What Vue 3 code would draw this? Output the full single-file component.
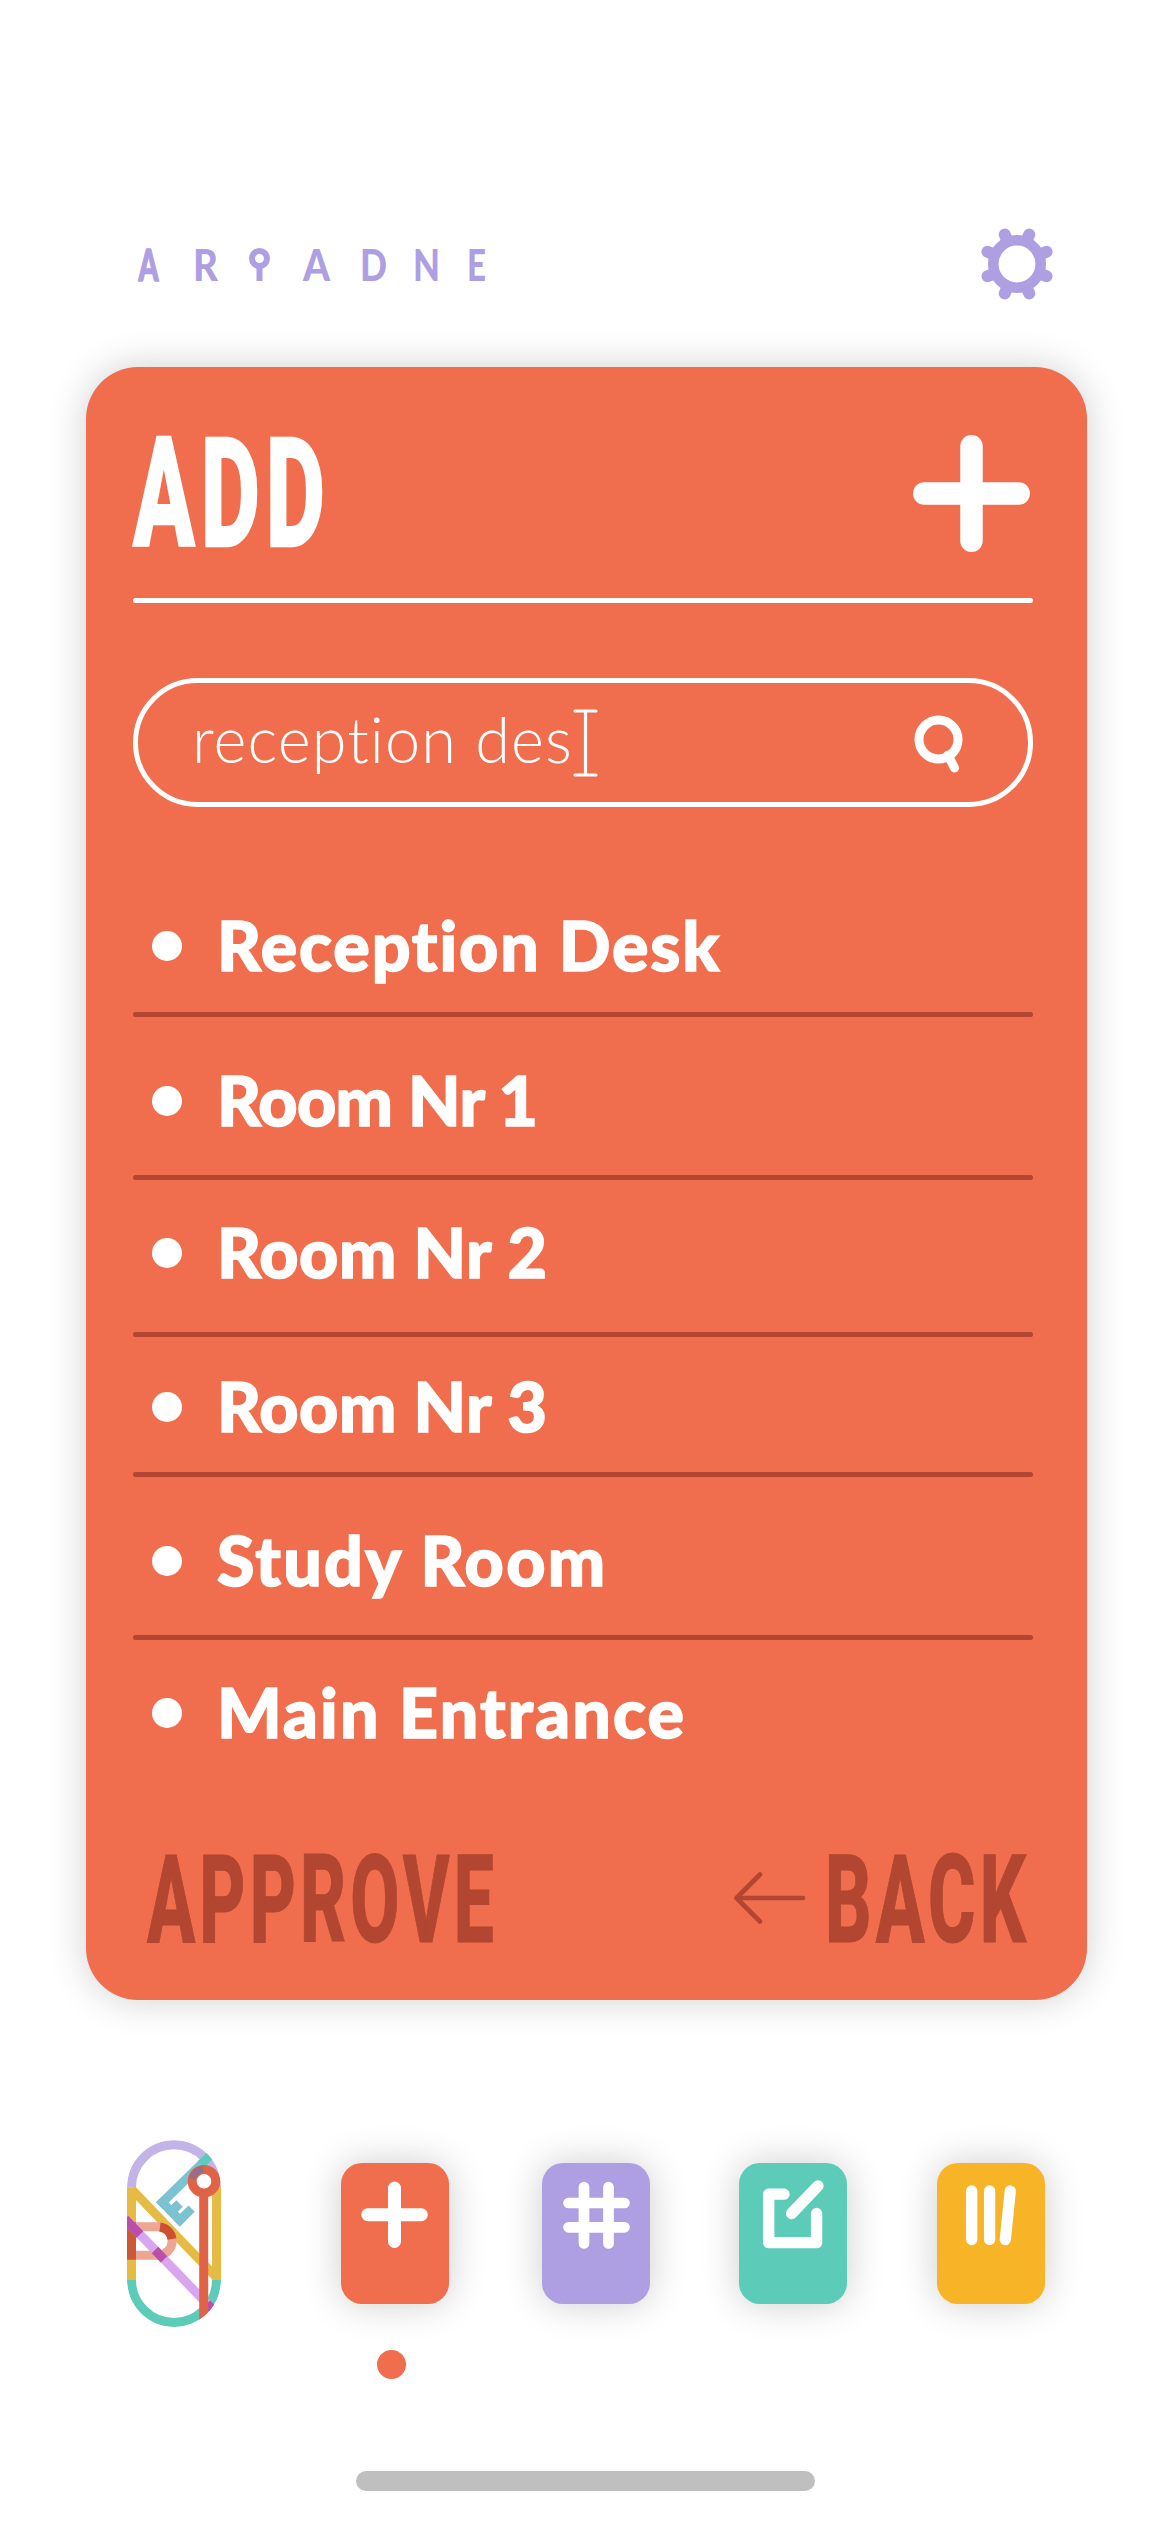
<script setup>
import { ref } from 'vue'

const query = ref('reception des')
const places = [
  { name: 'Reception Desk', tracking: 1.9 },
  { name: 'Room Nr 1', tracking: -0.6 },
  { name: 'Room Nr 2', tracking: 0.5 },
  { name: 'Room Nr 3', tracking: 0.5 },
  { name: 'Study Room', tracking: 2.3 },
  { name: 'Main Entrance', tracking: 2.2 }
]
const teeth = [22.5, 67.5, 112.5, 157.5, 202.5, 247.5, 292.5, 337.5]
</script>

<template>
  <div class="screen">
    <header class="topbar">
      <svg class="wordmark" width="352" height="44" viewBox="0 0 352 44">
        <text class="narrow" x="0.500" y="38" textLength="20" lengthAdjust="spacingAndGlyphs">A</text>
        <text x="55" y="38" textLength="25" lengthAdjust="spacingAndGlyphs">R</text>
        <text x="165" y="38" textLength="27" lengthAdjust="spacingAndGlyphs">A</text>
        <text x="222" y="38" textLength="27" lengthAdjust="spacingAndGlyphs">D</text>
        <text x="275" y="38" textLength="27" lengthAdjust="spacingAndGlyphs">N</text>
        <text x="329" y="38" textLength="19" lengthAdjust="spacingAndGlyphs">E</text>
        <circle cx="121.500" cy="15.500" r="7.500" />
        <path d="M121.500 22V38" />
      </svg>
      <svg class="gear" width="76" height="76" viewBox="-38 -38 76 76">
        <circle r="23.700" stroke-width="10.600" />
        <path v-for="a in teeth" :key="a" d="M0 -26V-32" stroke-width="12" :transform="`rotate(${a})`" />
      </svg>
    </header>

    <main class="card">
      <div class="card-head">
        <svg class="title" width="200" height="112" viewBox="0 0 200 112">
          <text x="0" y="111" textLength="198" lengthAdjust="spacingAndGlyphs">ADD</text>
        </svg>
        <svg class="plus" width="117" height="117" viewBox="0 0 117 117">
          <path d="M58.500 11.300V105.700M11.300 58.500H105.700" stroke-width="22.500" />
        </svg>
      </div>
      <div class="rule"></div>

      <div class="search">
        <span class="query">{{ query }}</span>
        <svg class="caret" width="25" height="68" viewBox="0 0 25 68">
          <path d="M2 2H23M2 66H23M12.500 2V66" stroke-width="3.200" />
        </svg>
        <svg class="lens" width="50" height="60" viewBox="0 0 50 60">
          <circle cx="24.500" cy="24.500" r="19.500" stroke-width="9" />
          <path d="M34 40L40.500 53" stroke-width="9" />
        </svg>
      </div>

      <ul class="places">
        <li v-for="place in places" :key="place.name">
          <div class="place">
            <i class="bullet"></i>
            <span class="name" :style="{ letterSpacing: place.tracking + 'px' }">{{ place.name }}</span>
          </div>
        </li>
      </ul>

      <footer class="actions">
        <svg width="350" height="92" viewBox="0 0 350 92">
          <text x="-1" y="90" textLength="351" lengthAdjust="spacingAndGlyphs">APPROVE</text>
        </svg>
        <div class="back">
          <svg class="arrow" width="72" height="52" viewBox="0 0 72 52">
            <path d="M69 26H3M26 2.500L2.500 26L26 49.500" stroke-width="4.600" />
          </svg>
          <svg width="204" height="92" viewBox="0 0 204 92">
            <text x="-4" y="90" textLength="205" lengthAdjust="spacingAndGlyphs">BACK</text>
          </svg>
        </div>
      </footer>
    </main>

    <nav class="tabs">
      <svg class="maze" width="94" height="187" viewBox="0 0 94 187">
        <defs>
          <clipPath id="pill"><rect width="94" height="187" rx="47" /></clipPath>
        </defs>
        <g clip-path="url(#pill)" fill="none" stroke-width="9" stroke-linecap="butt" stroke-linejoin="miter">
          <path d="M4.500 47.300A42.500 42.500 0 0 1 89.500 47.300" stroke="#c2b4e8" />
          <path d="M4.500 140A42.500 42.500 0 0 0 89.500 140" stroke="#5cccb8" />
          <path d="M4.500 47.300V140M89.500 47.300V140M4.500 49L89.500 137.500" stroke="#e6bb44" />
          <path d="M9 86.800H31A14.200 14.200 0 0 1 31 115.200H9" stroke="#eda594" />
          <path d="M4.500 82V119.700" stroke="#cb5836" />
          <path d="M33 87A14.200 14.200 0 0 1 45 99" stroke="#cf5030" />
          <path d="M0 81L90 174" stroke="#d8a5ee" />
          <path d="M-2 79L13 94.500M28 110L37 119.300M80 163.500L92 176" stroke="#ba4ea8" />
          <g transform="translate(29 62.300) rotate(45.500)" stroke="none" fill="#7cc2d2">
            <rect y="-9" width="34" height="9" />
            <rect y="-60" width="9" height="60" />
            <rect y="-75" width="9" height="16" fill="#5cccb8" />
            <rect x="12.700" y="-16" width="9.300" height="16" />
            <rect x="25" y="-21" width="9" height="21" />
          </g>
          <circle cx="77" cy="41.300" r="11.800" stroke="#df6344" />
          <path d="M65.500 38.500A11.800 11.800 0 0 1 76 29.500" stroke="#9a6d86" stroke-width="7" />
          <path d="M76.700 57V187" stroke="#df6344" />
        </g>
      </svg>

      <button class="tab add">
        <svg viewBox="0 0 108 141">
          <path d="M53.500 25V78.500M26.800 51.700H80.300" stroke-width="13" />
        </svg>
        <i class="marker"></i>
      </button>
      <button class="tab number">
        <svg viewBox="0 0 108 141">
          <path d="M42 24V80.500M66.500 24V80.500M26.500 40H82.500M26.500 64.300H82.500" stroke-width="10.700" />
        </svg>
      </button>
      <button class="tab edit">
        <svg viewBox="0 0 108 141">
          <path d="M45 31.200H29.700V79.700H77.600V50.500M52.600 50.500L79 22.800" stroke-width="11.300" />
        </svg>
      </button>
      <button class="tab library">
        <svg viewBox="0 0 108 141">
          <path d="M34.700 28V76.500M52.600 28V76.500M73.300 28L68.300 76.500" stroke-width="11.300" />
        </svg>
      </button>
    </nav>

    <div class="home-bar"></div>
  </div>
</template>

<style>
body {
  margin: 0;
  background: #fff;
}
</style>

<style scoped>
.screen {
  display: flex;
  flex-direction: column;
  box-sizing: border-box;
  width: 1171px;
  height: 2533px;
  padding-top: 226px;
  overflow: hidden;
  font-family: Lato, "Open Sans", sans-serif;
  font-variant-ligatures: none;
}

svg {
  display: block;
  flex: none;
  overflow: visible;
  fill: none;
  stroke-linecap: round;
  stroke-linejoin: round;
}

.topbar {
  display: flex;
  justify-content: space-between;
  height: 141px;
  padding: 0 116px 0 138px;
}

.wordmark {
  margin-top: 17px;
  stroke: #ae9fe2;
  stroke-width: 6;
  stroke-linecap: butt;
}

.wordmark text {
  fill: #ae9fe2;
  stroke: none;
  font-size: 43px;
  font-weight: 900;
}

.wordmark .narrow {
  stroke: #ae9fe2;
  stroke-width: 1.5px;
}

.gear {
  stroke: #ae9fe2;
}

.card {
  display: flex;
  flex-direction: column;
  box-sizing: border-box;
  width: 1001px;
  height: 1633px;
  margin-left: 86px;
  padding: 68px 54px 0 47px;
  border-radius: 52px;
  background: #f06e4d;
  box-shadow: 0 0 38px rgba(0, 0, 0, 0.19);
  color: #fff;
}

.card-head {
  display: flex;
  justify-content: space-between;
  height: 163px;
  padding-right: 3px;
}

.rule {
  height: 5px;
  border-radius: 3px;
  background: #fff;
}

.title text {
  fill: #fff;
  stroke: #fff;
  stroke-width: 2.5px;
  stroke-linejoin: miter;
  font-family: Roboto, sans-serif;
  font-size: 153px;
  font-weight: 800;
  letter-spacing: 10px;
}

.plus,
.caret,
.lens {
  stroke: #fff;
}

.search {
  display: flex;
  align-items: center;
  box-sizing: border-box;
  height: 129px;
  margin-top: 75px;
  padding: 0 64px 0 54px;
  border: 5px solid #fff;
  border-radius: 65px;
}

.query {
  margin-top: -7px;
  font-size: 63px;
  font-weight: 300;
  line-height: 80px;
  letter-spacing: 1.1px;
}

.lens {
  margin-left: auto;
  margin-top: 4px;
}

.places {
  margin: 99px 0 0;
  padding: 0;
  list-style: none;
}

.place {
  display: flex;
  align-items: center;
  height: 80px;
  padding-left: 19px;
  font-size: 68px;
  font-weight: 900;
  white-space: nowrap;
}

.name {
  margin-top: -4px;
  -webkit-text-stroke: 1.5px #fff;
}

.bullet {
  width: 30px;
  height: 30px;
  margin-right: 35px;
  border-radius: 50%;
  background: #fff;
}

.places li:not(:last-child)::after {
  content: "";
  display: block;
  height: 5px;
  border-radius: 3px;
  background: #b24630;
}

.places li:nth-child(1)::after {
  margin: 26px 0 44px;
}

.places li:nth-child(2)::after,
.places li:nth-child(5)::after {
  margin: 34px 0 33px;
}

.places li:nth-child(3)::after {
  margin: 39px 0 30px;
}

.places li:nth-child(4)::after {
  margin: 25px 0 44px;
}

.actions {
  display: flex;
  justify-content: space-between;
  margin-top: 99px;
  padding: 0 0 0 15px;
}

.actions text {
  fill: #b24630;
  stroke: #b24630;
  stroke-width: 1px;
  stroke-linejoin: miter;
  font-family: Roboto, sans-serif;
  font-size: 122px;
  font-weight: 800;
  letter-spacing: 7px;
}

.back {
  display: flex;
  align-items: center;
  gap: 23px;
}

.arrow {
  stroke: #b24630;
}

.tabs {
  display: grid;
  grid-template-columns: 214px 201px 197px 198px 108px;
  align-items: center;
  height: 187px;
  margin: 140px 0 0 127px;
}

.tab {
  position: relative;
  width: 108px;
  height: 141px;
  padding: 0;
  border: 0;
  border-radius: 21px;
  box-shadow: 0 0 38px rgba(0, 0, 0, 0.2);
}

.tab svg {
  width: 108px;
  height: 141px;
  stroke: #fff;
}

.add {
  background: #f06e4d;
}

.number {
  background: #ae9fe2;
}

.edit {
  background: #5cccb8;
}

.library {
  background: #f6b426;
}

.marker {
  position: absolute;
  top: 187px;
  left: 36px;
  width: 29px;
  height: 29px;
  border-radius: 50%;
  background: #f06e4d;
}

.home-bar {
  width: 459px;
  height: 20px;
  margin: 144px 0 0 356px;
  border-radius: 10px;
  background: #bfbfbf;
}
</style>
